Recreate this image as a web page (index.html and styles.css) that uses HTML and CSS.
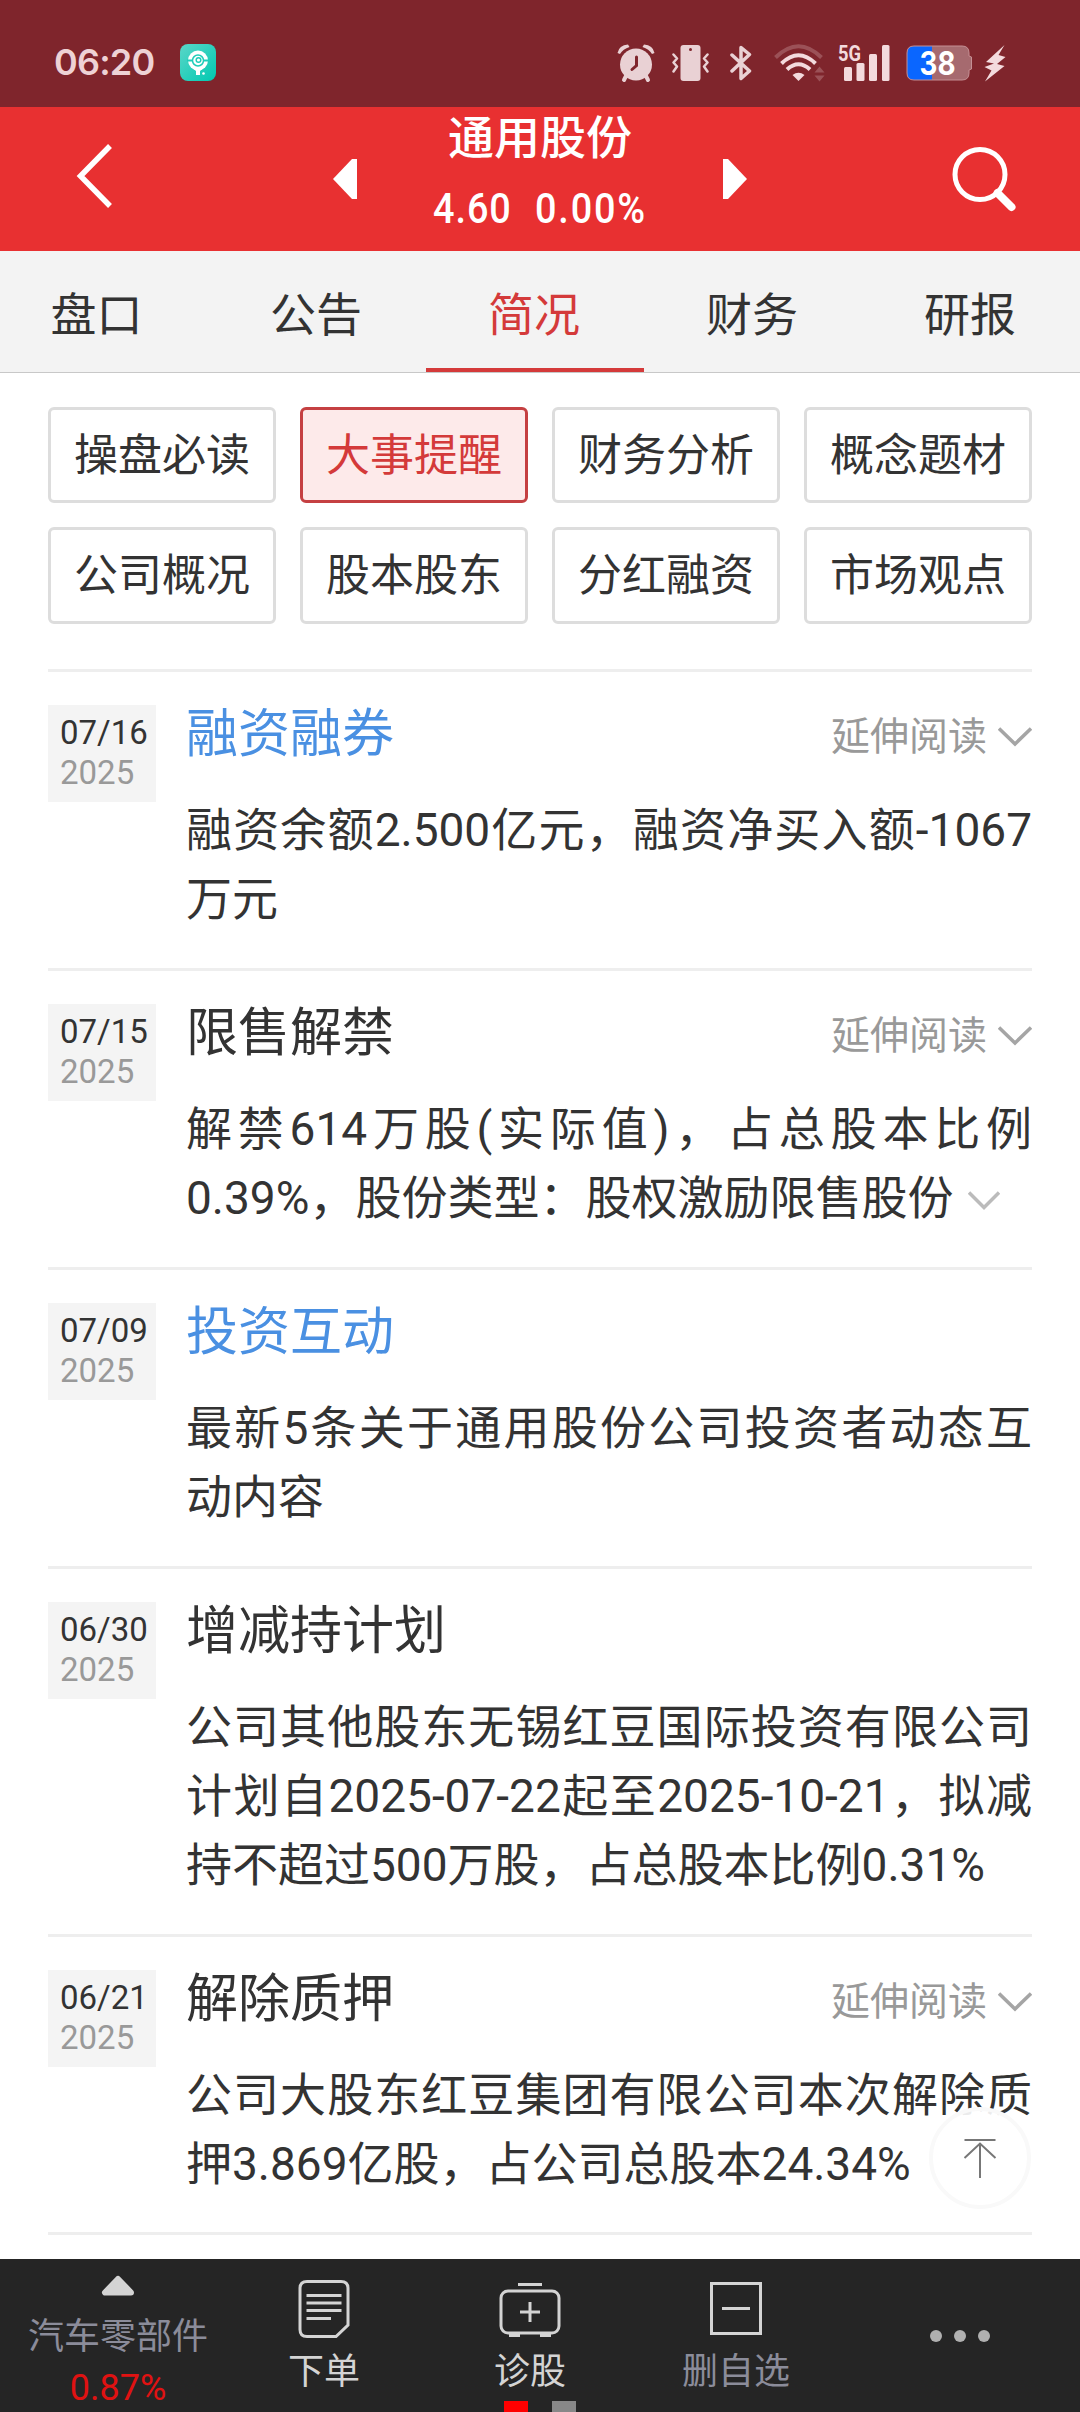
FILE: index.html
```html
<!DOCTYPE html>
<html lang="zh-CN">
<head>
  <meta charset="UTF-8">
  <title>通用股份 - 简况</title>
  <link rel="stylesheet" href="styles.css">
</head>
<body>
  <div class="status-bar">
    <span class="clock">06:20</span>
    <svg class="app-icon" width="36" height="37" viewBox="0 0 36 37">
      <defs>
        <linearGradient id="teal" x1="0" y1="0" x2="1" y2="1">
          <stop offset="0" stop-color="#5bd6c8"/>
          <stop offset="1" stop-color="#00c9b1"/>
        </linearGradient>
      </defs>
      <rect width="36" height="37" rx="8" fill="url(#teal)"/>
      <circle cx="18" cy="16.5" r="10" fill="#fff"/>
      <path d="M13 24h10l-3 3v4h-4v-4z" fill="#fff"/>
      <path d="M7 16.5h22" stroke="#1fcdb9" stroke-width="2"/>
      <circle cx="18" cy="16.5" r="5.5" fill="#fff" stroke="#1fcdb9" stroke-width="1.5"/>
      <circle cx="18.5" cy="16" r="2.3" fill="none" stroke="#1fcdb9" stroke-width="1.5"/>
      <circle cx="23.5" cy="29.5" r="1.3" fill="#fff"/>
    </svg>
    <div class="status-icons">
      <svg class="alarm" width="38" height="40" viewBox="0 0 38 40">
        <path d="M0.500 10Q2 2 11 1.500L12.500 4Q6 6 3 11zM37.500 10Q36 2 27 1.500L25.500 4Q32 6 35 11z" fill="#e9d1d4"/>
        <path d="M9 33l-2 4M29 33l2 4" stroke="#e9d1d4" stroke-width="4" stroke-linecap="round"/>
        <circle cx="19" cy="21.500" r="16" fill="#e9d1d4"/>
        <path d="M19.500 14v8.500L15 26.500" fill="none" stroke="#7f252c" stroke-width="3" stroke-linecap="round"/>
      </svg>
      <svg class="vibrate" width="37" height="38" viewBox="0 0 37 38">
        <rect x="8.500" y="1" width="20" height="36" rx="3" fill="#e9d1d4"/>
        <circle cx="18.500" cy="5.500" r="1.500" fill="#7f252c"/>
        <path d="M1.500 10.500l3.500 4-3.500 4 3.500 4-3.500 5M35.500 10.500l-3.500 4 3.500 4-3.500 4 3.500 5" fill="none" stroke="#e9d1d4" stroke-width="2.500" stroke-linecap="round" stroke-linejoin="round"/>
      </svg>
      <svg class="bluetooth" width="22" height="38" viewBox="0 0 22 38">
        <path d="M2 11l17.500 16L11 34.500v-31l8.500 7L2 27" fill="none" stroke="#e9d1d4" stroke-width="3.500" stroke-linecap="round" stroke-linejoin="round"/>
      </svg>
      <svg class="wifi" width="52" height="38" viewBox="0 0 52 38">
        <path d="M1.500 13.500Q24.500-9 47.500 13.500" fill="none" stroke="#9b5157" stroke-width="4"/>
        <path d="M7.500 19.500Q24.500 3 41.500 19.500" fill="none" stroke="#f3dadd" stroke-width="4"/>
        <path d="M13 25.500Q24.500 15 36 25.500" fill="none" stroke="#f3dadd" stroke-width="4"/>
        <path d="M18.500 31Q24.500 26.500 30.500 31L24.500 37z" fill="#f3dadd"/>
        <path d="M45.500 22.500l5 6h-10zM45.500 37.500l5-6h-10z" fill="#9b5157"/>
      </svg>
      <svg class="signal" width="53" height="40" viewBox="0 0 53 40">
        <text class="net" x="0" y="18" textLength="23" lengthAdjust="spacingAndGlyphs">5G</text>
        <rect x="6" y="24" width="8" height="14" rx="1.500"/>
        <rect x="18.500" y="20" width="8" height="18" rx="1.500"/>
        <rect x="31" y="11" width="8" height="27" rx="1.500"/>
        <rect x="44" y="2" width="7.500" height="36" rx="1.500"/>
      </svg>
      <svg class="battery" width="67" height="36" viewBox="0 0 67 36">
        <path d="M26 1h30q7 0 7 7v3l2.500 1v12l-2.500 1v3q0 7-7 7H26z" fill="#a66a6f"/>
        <path d="M26 1H8q-7 0-7 7v20q0 7 7 7h18z" fill="#0a66ff"/>
        <path d="M8 1h48q7 0 7 7v3l2.500 1v12l-2.500 1v3q0 7-7 7H8q-7 0-7-7V8q0-7 7-7z" fill="none" stroke="#c58f94"/>
        <text class="level" x="13.500" y="29.500" textLength="36" lengthAdjust="spacingAndGlyphs">38</text>
      </svg>
      <svg class="bolt" width="22" height="38" viewBox="0 0 22 38">
        <path d="M20.500 1L2 18l8 1.500L.5 23l7 3.500L1 37.500 20.500 22l-7.500-2 8.500-7-7-2z" fill="#f3dadd"/>
      </svg>
    </div>
  </div>

  <div class="header">
    <svg class="back" width="40" height="68" viewBox="0 0 40 68">
      <path d="M36 3L6.500 33 36 63" fill="none" stroke="#fff" stroke-width="5.500"/>
    </svg>
    <svg class="prev" width="24" height="40" viewBox="0 0 24 40"><path d="M24 0h-5L0 20l19 20h5z" fill="#fff"/></svg>
    <div class="stock">
      <div class="stock-name">通用股份</div>
      <div class="stock-price"><span>4.60</span><span class="rate">0.00%</span></div>
    </div>
    <svg class="next" width="24" height="40" viewBox="0 0 24 40"><path d="M0 0h5l19 20L5 40H0z" fill="#fff"/></svg>
    <svg class="search" width="66" height="68" viewBox="0 0 66 68">
      <circle cx="30" cy="29.500" r="25" fill="none" stroke="#fff" stroke-width="5"/>
      <path d="M47.500 48L61.500 62" stroke="#fff" stroke-width="8" stroke-linecap="round"/>
    </svg>
  </div>

  <div class="tabs">
    <div class="tab first">盘口</div>
    <div class="tab">公告</div>
    <div class="tab active">简况</div>
    <div class="tab">财务</div>
    <div class="tab">研报</div>
  </div>

  <div class="content">
    <div class="chips">
      <div class="chip">操盘必读</div>
      <div class="chip active">大事提醒</div>
      <div class="chip">财务分析</div>
      <div class="chip">概念题材</div>
      <div class="chip">公司概况</div>
      <div class="chip">股本股东</div>
      <div class="chip">分红融资</div>
      <div class="chip">市场观点</div>
    </div>

    <div class="event">
      <div class="date">07/16<span>2025</span></div>
      <div class="detail">
        <div class="event-head">
          <h2 class="link">融资融券</h2>
          <div class="more">延伸阅读<svg class="chevron" width="34" height="20" viewBox="0 0 34 20"><path d="M1 1.500l16 15.500L33 1.500"/></svg></div>
        </div>
        <p>融资余额2.500亿元，融资净买入额-1067万元</p>
      </div>
    </div>

    <div class="event">
      <div class="date">07/15<span>2025</span></div>
      <div class="detail">
        <div class="event-head">
          <h2>限售解禁</h2>
          <div class="more">延伸阅读<svg class="chevron" width="34" height="20" viewBox="0 0 34 20"><path d="M1 1.500l16 15.500L33 1.500"/></svg></div>
        </div>
        <p>解禁614万股(实际值)，占总股本比例0.39%，股份类型：股权激励限售股份<svg class="chevron expand" width="32" height="20" viewBox="0 0 32 20"><path d="M1 1.500l15 15L31 1.500"/></svg></p>
      </div>
    </div>

    <div class="event">
      <div class="date">07/09<span>2025</span></div>
      <div class="detail">
        <div class="event-head">
          <h2 class="link">投资互动</h2>
        </div>
        <p>最新5条关于通用股份公司投资者动态互动内容</p>
      </div>
    </div>

    <div class="event">
      <div class="date">06/30<span>2025</span></div>
      <div class="detail">
        <div class="event-head">
          <h2>增减持计划</h2>
        </div>
        <p>公司其他股东无锡红豆国际投资有限公司计划自2025-07-22起至2025-10-21，拟减持不超过500万股，占总股本比例0.31%</p>
      </div>
    </div>

    <div class="event">
      <div class="date">06/21<span>2025</span></div>
      <div class="detail">
        <div class="event-head">
          <h2>解除质押</h2>
          <div class="more">延伸阅读<svg class="chevron" width="34" height="20" viewBox="0 0 34 20"><path d="M1 1.500l16 15.500L33 1.500"/></svg></div>
        </div>
        <p>公司大股东红豆集团有限公司本次解除质押3.869亿股，占公司总股本24.34%</p>
      </div>
    </div>
    <div class="list-end"></div>
  </div>

  <div class="to-top">
    <svg width="34" height="40" viewBox="0 0 34 40">
      <path d="M1.500 2h31M17 5v35M1.500 20L17 5.500 32.500 20" fill="none" stroke="#777" stroke-width="2"/>
    </svg>
  </div>

  <div class="bottom-bar">
    <div class="nav sector">
      <svg width="34" height="22" viewBox="0 0 34 22"><path d="M17 4L4 17.500h26z" fill="#d4d4d4" stroke="#d4d4d4" stroke-width="6" stroke-linejoin="round"/></svg>
      <span class="sector-name">汽车零部件</span>
      <span class="sector-rate">0.87%</span>
    </div>
    <div class="nav">
      <svg width="52" height="60" viewBox="0 0 52 60">
        <path d="M9 2.500h34q7 0 7 7V46L38 57.500H9q-7 0-7-7v-41q0-7 7-7z"/>
        <path d="M8.500 16.500h35M8.500 24h35M8.500 31.500h35M8.500 39.500H33"/>
      </svg>
      <span>下单</span>
    </div>
    <div class="nav">
      <svg width="62" height="60" viewBox="0 0 62 60">
        <rect x="2" y="12" width="58" height="42" rx="7"/>
        <path d="M19 5.500h24M31 23v20M21 33h20"/>
        <path d="M10 56h11M41 56h11" stroke-width="4"/>
      </svg>
      <span>诊股</span>
      <div class="pager"><i class="on"></i><i></i></div>
    </div>
    <div class="nav muted">
      <svg width="52" height="60" viewBox="0 0 52 60">
        <rect x="1.500" y="4.500" width="49" height="50"/>
        <path d="M12 29.500h28"/>
      </svg>
      <span>删自选</span>
    </div>
    <div class="nav dots"><i></i><i></i><i></i></div>
  </div>
</body>
</html>
```
FILE: styles.css
```css
* { box-sizing: border-box; }
body {
  margin: 0;
  height: 2412px;
  display: flex;
  flex-direction: column;
  overflow: hidden;
  position: relative;
  background: #fff;
  color: #333;
  font-family: Roboto, "Noto Sans CJK SC", sans-serif;
}
svg { display: block; flex: none; }

/* status bar */
.status-bar {
  height: 107px;
  flex: none;
  display: flex;
  align-items: center;
  padding: 18px 74px 0 54px;
  background: #7f252c;
}
.clock {
  width: 126px;
  font: 600 36px/40px Inter, sans-serif;
  letter-spacing: -.8px;
  color: #eed2d5;
  padding-bottom: 2px;
}
.status-icons { margin-left: auto; display: flex; align-items: center; }
.vibrate { margin-left: 17px; }
.bluetooth { margin-left: 21px; }
.wifi { margin-left: 22px; }
.signal { margin-left: 12px; fill: #f3dadd; overflow: visible; }
.battery { margin-left: 15px; }
.bolt { margin-left: 11px; }
.net { font: 700 22px Roboto, sans-serif; }
.level { font: 700 32px Inter, sans-serif; fill: #fff; }

/* header */
.header {
  height: 144px;
  flex: none;
  display: flex;
  align-items: center;
  padding: 0 64px 0 74px;
  background: #e83031;
  color: #fff;
}
.back { position: relative; top: -2px; }
.prev { margin-left: 219px; }
.stock { width: 366px; height: 144px; text-align: center; }
.stock-name { font-size: 46px; font-weight: 500; line-height: 60px; padding-top: 1px; }
.stock-price {
  display: flex;
  justify-content: center;
  gap: 26px;
  margin-top: 13px;
  font-size: 42px;
  font-weight: 500;
  line-height: 56px;
  letter-spacing: 1px;
  transform: scaleX(.9);
}
.rate { letter-spacing: 2px; }
.search { margin-left: auto; }

/* tabs */
.tabs {
  height: 122px;
  flex: none;
  display: flex;
  background: #f3f3f3;
  border-bottom: 1px solid #c8c8c8;
}
.tab { width: 218px; height: 121px; padding-right: 2px; font-size: 46px; line-height: 129px; text-align: center; }
.tab.first { width: 208px; padding-right: 15px; }
.tab.active { color: #d43a3a; border-bottom: 4px solid #d43a3a; }

.content { flex: 1; padding: 34px 48px 0; }
.chips { display: grid; grid-template-columns: repeat(4, 228px); gap: 24px; margin-bottom: 45.6px; }
.chip {
  height: 96.4px;
  border: 3px solid #ddd;
  border-radius: 6px;
  font-size: 44px;
  line-height: 92px;
  text-align: center;
}
.chip.active { color: #d43a3a; border-color: #c54042; background: #fdeaea; }

/* events */
.event {
  display: flex;
  gap: 30px;
  padding: 33px 0 33.8px;
  border-top: 3px solid #eee;
}
.date {
  width: 108px;
  height: 97px;
  padding: 8px 0 0 12px;
  background: #f4f4f4;
  font-size: 33px;
  line-height: 40px;
}
.date span { display: block; color: #999; }
.detail { flex: 1; }
.event-head { display: flex; justify-content: space-between; height: 52px; margin-bottom: 39px; }
.event h2 { margin: 0; font-size: 52px; font-weight: 400; line-height: 59px; }
.event h2.link { color: #4a90e2; }
.more { display: flex; align-items: center; height: 64px; font-size: 39px; line-height: 60px; color: #999; }
.chevron { margin-left: 11px; fill: none; stroke: #a5a5a5; stroke-width: 3.5; }
.expand { display: inline-block; margin-left: 15px; stroke: #bbb; vertical-align: 3px; }
.event p { margin: 0; font-size: 46px; line-height: 69px; text-align: justify; }
.list-end { border-top: 3px solid #eee; }

.to-top {
  position: absolute;
  right: 49px;
  bottom: 203px;
  width: 102px;
  height: 102px;
  display: flex;
  align-items: center;
  justify-content: center;
  border: 4px solid #f9f9f9;
  border-radius: 50%;
  background: rgba(255, 255, 255, .9);
}

/* bottom bar */
.bottom-bar {
  height: 153px;
  flex: none;
  display: flex;
  background: #252525;
  color: #d4d4d4;
}
.nav {
  width: 206px;
  display: flex;
  flex-direction: column;
  align-items: center;
  padding-top: 20px;
  font-size: 36px;
  line-height: 50px;
  position: relative;
}
.nav svg { margin-bottom: 8px; fill: none; stroke: #d4d4d4; stroke-width: 3; }
.sector { width: 221px; padding: 16px 0 0 15px; }
.sector svg { margin-bottom: 15px; }
.sector-name { color: #8b8c9a; }
.sector-rate { color: #e01212; margin-top: 1px; }
.muted span { color: #8b8c9a; }
.pager { position: absolute; left: 77px; top: 142px; display: flex; gap: 24px; }
.pager i { width: 24px; height: 12px; background: #888; }
.pager .on { background: #f00; }
.dots { width: 241px; flex-direction: row; justify-content: center; gap: 12px; padding: 0 0 0 1px; }
.dots i { width: 12px; height: 12px; border-radius: 50%; background: #b0b0b0; }
```
